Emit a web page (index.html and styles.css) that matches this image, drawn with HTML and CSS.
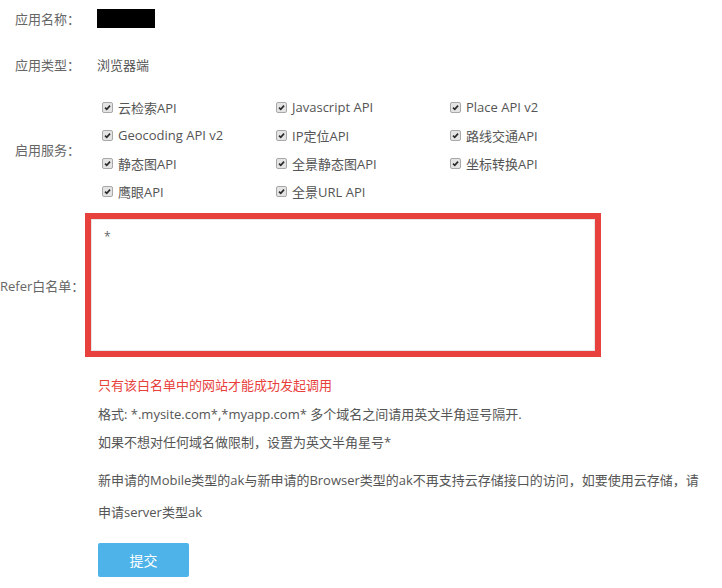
FILE: index.html
```html
<!DOCTYPE html>
<html lang="zh-CN">
<head>
<meta charset="utf-8">
<title>应用配置</title>
<link rel="stylesheet" href="styles.css">
</head>
<body>
<div class="form">
  <div class="row row-name">
    <div class="label">应用名称：</div>
    <div class="content"><span class="redacted"></span></div>
  </div>
  <div class="row row-type">
    <div class="label">应用类型：</div>
    <div class="content">浏览器端</div>
  </div>
  <div class="row row-services">
    <div class="label">启用服务：</div>
    <div class="content services">
      <label class="svc"><span class="cb"><svg viewBox="0 0 11 11"><path d="M2.5 5.6 L4.6 7.8 L8.6 3.2" /></svg></span>云检索API</label>
      <label class="svc"><span class="cb"><svg viewBox="0 0 11 11"><path d="M2.5 5.6 L4.6 7.8 L8.6 3.2" /></svg></span>Javascript API</label>
      <label class="svc"><span class="cb"><svg viewBox="0 0 11 11"><path d="M2.5 5.6 L4.6 7.8 L8.6 3.2" /></svg></span>Place API v2</label>
      <label class="svc"><span class="cb"><svg viewBox="0 0 11 11"><path d="M2.5 5.6 L4.6 7.8 L8.6 3.2" /></svg></span>Geocoding API v2</label>
      <label class="svc"><span class="cb"><svg viewBox="0 0 11 11"><path d="M2.5 5.6 L4.6 7.8 L8.6 3.2" /></svg></span>IP定位API</label>
      <label class="svc"><span class="cb"><svg viewBox="0 0 11 11"><path d="M2.5 5.6 L4.6 7.8 L8.6 3.2" /></svg></span>路线交通API</label>
      <label class="svc"><span class="cb"><svg viewBox="0 0 11 11"><path d="M2.5 5.6 L4.6 7.8 L8.6 3.2" /></svg></span>静态图API</label>
      <label class="svc"><span class="cb"><svg viewBox="0 0 11 11"><path d="M2.5 5.6 L4.6 7.8 L8.6 3.2" /></svg></span>全景静态图API</label>
      <label class="svc"><span class="cb"><svg viewBox="0 0 11 11"><path d="M2.5 5.6 L4.6 7.8 L8.6 3.2" /></svg></span>坐标转换API</label>
      <label class="svc"><span class="cb"><svg viewBox="0 0 11 11"><path d="M2.5 5.6 L4.6 7.8 L8.6 3.2" /></svg></span>鹰眼API</label>
      <label class="svc"><span class="cb"><svg viewBox="0 0 11 11"><path d="M2.5 5.6 L4.6 7.8 L8.6 3.2" /></svg></span>全景URL API</label>
    </div>
  </div>
  <div class="row row-refer">
    <div class="label">Refer白名单：</div>
    <div class="content refer">
      <div class="highlight"><div class="textarea">*</div></div>
    </div>
  </div>
  <div class="notes">
    <p class="warn">只有该白名单中的网站才能成功发起调用</p>
    <p>格式: *.mysite.com*,*myapp.com* 多个域名之间请用英文半角逗号隔开.</p>
    <p>如果不想对任何域名做限制，设置为英文半角星号*</p>
    <p class="long">新申请的Mobile类型的ak与新申请的Browser类型的ak不再支持云存储接口的访问，如要使用云存储，请申请server类型ak</p>
    <button class="submit" type="button">提交</button>
  </div>
</div>
</body>
</html>
```

FILE: styles.css
```css
html, body {
  margin: 0;
  padding: 0;
  background: #ffffff;
}

body {
  font-family: "Open Sans", "Noto Sans CJK SC", sans-serif;
  font-size: 13px;
  color: #555555;
}

.form {
  width: 722px;
  padding-top: 8px;
}

.row {
  display: flex;
  align-items: center;
}

.label {
  width: 80px;
  flex: none;
  text-align: right;
  color: #666666;
  white-space: nowrap;
}

.content {
  margin-left: 17px;
}

.row-name {
  height: 20px;
}

.redacted {
  display: block;
  width: 58px;
  height: 19px;
  background: #000000;
}

.row-type {
  margin-top: 26px;
  height: 20px;
}

.row-services {
  margin-top: 19px;
}

.services {
  margin-left: 22px;
  display: grid;
  grid-template-columns: 174px 174px 174px;
  grid-auto-rows: 28px;
}

.svc {
  display: flex;
  align-items: center;
  gap: 5px;
  white-space: nowrap;
}

.cb {
  width: 11px;
  height: 11px;
  box-sizing: border-box;
  border: 1px solid #a8a8a8;
  border-radius: 2px;
  background: #e4e4e4;
  display: flex;
}

.cb svg {
  width: 9px;
  height: 9px;
}

.cb path {
  fill: none;
  stroke: #2a2a2a;
  stroke-width: 2;
}

.row-refer {
  margin-top: 8px;
}

.refer {
  margin-left: 5px;
}

.highlight {
  width: 516px;
  height: 144px;
  box-sizing: border-box;
  border: 6px solid #e8403c;
}

.textarea {
  height: 100%;
  box-sizing: border-box;
  border: 1px solid #e6e6e6;
  padding: 10px 12px;
  font-size: 12px;
  color: #666666;
  line-height: 14px;
}

.notes {
  margin-left: 98px;
  margin-top: 14px;
  width: 612px;
}

.notes p {
  margin: 0;
  line-height: 28px;
  color: #555555;
}

.notes p.warn {
  color: #e8403c;
  margin-bottom: 1px;
}

.notes p.long {
  margin-top: 8px;
  line-height: 32px;
}

.submit {
  display: block;
  margin-top: 15px;
  width: 91px;
  height: 34px;
  border: none;
  border-radius: 2px;
  background: #4db3e8;
  color: #ffffff;
  font-family: "Noto Sans CJK SC", sans-serif;
  font-size: 14px;
  padding: 0;
}
```
